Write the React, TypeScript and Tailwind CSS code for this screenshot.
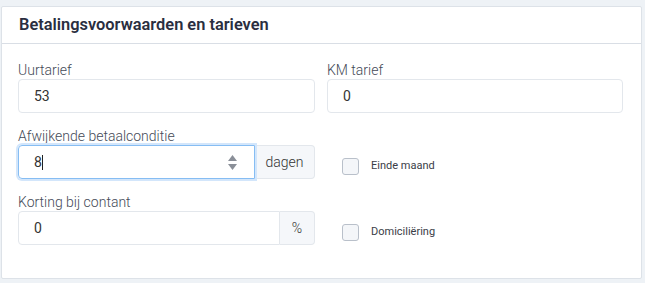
import { ReactNode } from "react";

const font = { fontFamily: "Roboto, 'Noto Sans', sans-serif" };

function Label({ children }: { children: ReactNode }) {
  return (
    <div className="h-[18px] text-[14px] leading-[18px] font-light text-[#454a57]">
      {children}
    </div>
  );
}

function Checkbox({ label }: { label: string }) {
  return (
    <div className="flex items-center gap-[12px] pl-[15px]">
      <div className="w-[17px] h-[17px] rounded-[3px] border border-[#b9c0ca] bg-[#f4f6f9]" />
      <span className="text-[11px] text-[#3a3d47]">{label}</span>
    </div>
  );
}

export default function App() {
  return (
    <div className="w-[645px] h-[283px] bg-[#eef2f6] pt-[6px] pl-[1px]" style={font}>
      <div className="w-[641px] h-[273px] bg-white border border-[#dde2e8] rounded-[2px]">
        {/* kop */}
        <div className="h-[37px] flex items-center px-[17px] border-b border-[#d9dee5]">
          <span className="text-[16.4px] font-semibold text-[#2a2e40]">
            Betalingsvoorwaarden en tarieven
          </span>
        </div>

        <div className="pl-[16px] pr-[17px] pt-[17px] grid grid-cols-[297px_296px] gap-x-[12px]">
          {/* rij 1 */}
          <div>
            <Label>Uurtarief</Label>
            <div className="h-[34px] border border-[#e3e7ec] rounded-[4px] flex items-center pl-[15px] text-[14px] text-[#333]">
              53
            </div>
          </div>
          <div>
            <Label>KM tarief</Label>
            <div className="h-[34px] border border-[#e3e7ec] rounded-[4px] flex items-center pl-[15px] text-[14px] text-[#333]">
              0
            </div>
          </div>

          {/* rij 2 */}
          <div className="mt-[14px]">
            <Label>Afwijkende betaalconditie</Label>
            <div className="h-[34px] flex">
              <div className="flex-1 flex items-center border border-[#86bdf3] rounded-l-[4px] shadow-[0_0_0_2px_#d3e6fb] pl-[15px] pr-[17px] text-[14px] text-[#333] relative z-10">
                <span>8</span>
                <span className="w-px h-[15px] bg-[#222]" />
                <div className="ml-auto flex flex-col items-center gap-[3px]">
                  <svg width="9" height="6" viewBox="0 0 9 6">
                    <path d="M4.5 0 L9 6 L0 6 Z" fill="#8a8f98" />
                  </svg>
                  <svg width="9" height="6" viewBox="0 0 9 6">
                    <path d="M0 0 L9 0 L4.5 6 Z" fill="#8a8f98" />
                  </svg>
                </div>
              </div>
              <div className="w-[60px] flex items-center justify-center border border-l-0 border-[#e3e7ec] rounded-r-[4px] bg-[#f5f7fa] text-[14px] font-light text-[#333]">
                dagen
              </div>
            </div>
          </div>
          <div className="mt-[14px] pt-[31px]">
            <Checkbox label="Einde maand" />
          </div>

          {/* rij 3 */}
          <div className="mt-[14px]">
            <Label>Korting bij contant</Label>
            <div className="h-[34px] flex">
              <div className="flex-1 flex items-center border border-[#e3e7ec] rounded-l-[4px] pl-[15px] text-[14px] text-[#333]">
                0
              </div>
              <div className="w-[35px] flex items-center justify-center border border-l-0 border-[#e3e7ec] rounded-r-[4px] bg-[#f5f7fa] text-[14px] font-light text-[#333]">
                %
              </div>
            </div>
          </div>
          <div className="mt-[14px] pt-[31px]">
            <Checkbox label="Domiciliëring" />
          </div>
        </div>
      </div>
    </div>
  );
}
